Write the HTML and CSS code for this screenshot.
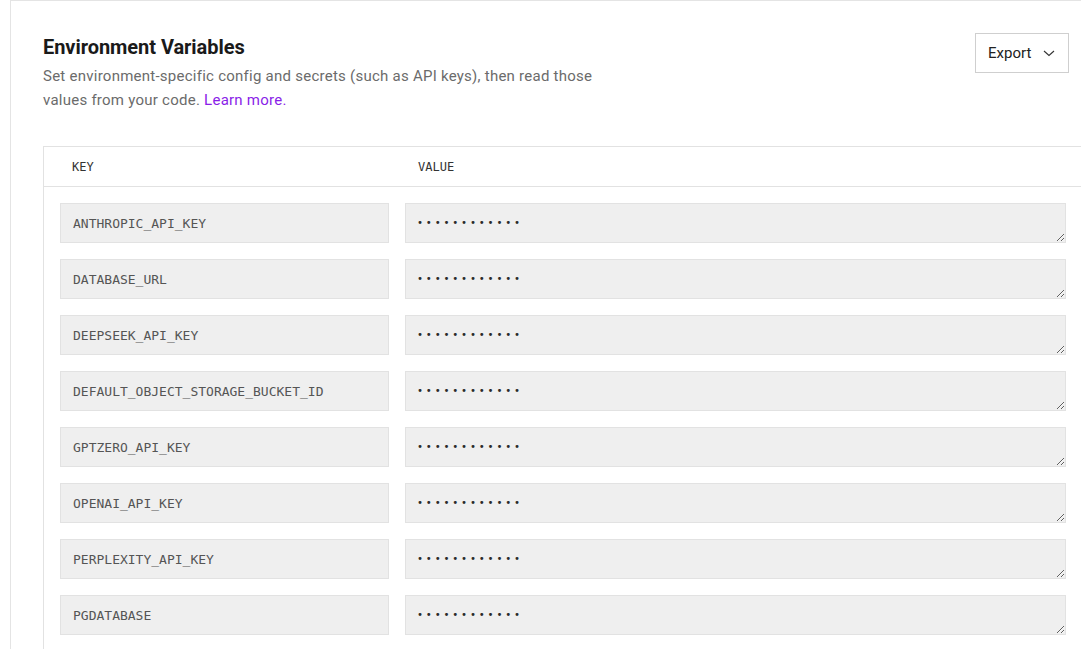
FILE: index.html
```html
<!DOCTYPE html>
<html lang="en">
<head>
<meta charset="utf-8">
<title>Environment Variables</title>
<link rel="stylesheet" href="styles.css">
</head>
<body>
<div class="card">
  <div class="head">
    <div class="intro">
      <h1 class="title">Environment Variables</h1>
      <p class="desc">Set environment-specific config and secrets (such as API keys), then read those values from your code. <a class="link" href="#">Learn more.</a></p>
    </div>
    <button class="export" type="button">Export
      <svg class="chev" width="12" height="12" viewBox="0 0 12 12"><path d="M1 4 L6 8.5 L11 4" fill="none" stroke="#333" stroke-width="1.1"/></svg>
    </button>
  </div>
  <div class="table">
    <div class="thead">
      <div class="th th-key">KEY</div>
      <div class="th th-val">VALUE</div>
    </div>
    <div class="tbody">
      <div class="row"><input class="key" readonly value="ANTHROPIC_API_KEY"><textarea class="val" readonly>••••••••••••</textarea></div>
      <div class="row"><input class="key" readonly value="DATABASE_URL"><textarea class="val" readonly>••••••••••••</textarea></div>
      <div class="row"><input class="key" readonly value="DEEPSEEK_API_KEY"><textarea class="val" readonly>••••••••••••</textarea></div>
      <div class="row"><input class="key" readonly value="DEFAULT_OBJECT_STORAGE_BUCKET_ID"><textarea class="val" readonly>••••••••••••</textarea></div>
      <div class="row"><input class="key" readonly value="GPTZERO_API_KEY"><textarea class="val" readonly>••••••••••••</textarea></div>
      <div class="row"><input class="key" readonly value="OPENAI_API_KEY"><textarea class="val" readonly>••••••••••••</textarea></div>
      <div class="row"><input class="key" readonly value="PERPLEXITY_API_KEY"><textarea class="val" readonly>••••••••••••</textarea></div>
      <div class="row"><input class="key" readonly value="PGDATABASE"><textarea class="val" readonly>••••••••••••</textarea></div>
    </div>
  </div>
</div>
</body>
</html>
```
FILE: styles.css
```css
html, body {
  margin: 0;
  padding: 0;
  background: #fff;
  overflow: hidden;
  height: 649px;
}
body {
  font-family: Roboto, "Liberation Sans", sans-serif;
  color: #1a1a1a;
}
.card {
  margin-left: 10px;
  width: 1100px;
  border-left: 1px solid #e4e4e4;
  border-top: 1px solid #e4e4e4;
  padding: 32px 0 0 32px;
  box-sizing: border-box;
}
.head {
  width: 1026px;
  display: flex;
  justify-content: space-between;
  align-items: flex-start;
}
.title {
  margin: 0;
  font-size: 20px;
  line-height: 28px;
  font-weight: 700;
  letter-spacing: -0.05px;
  color: #1a1a1a;
}
.desc {
  margin: 3px 0 0;
  width: 570px;
  font-size: 15px;
  line-height: 24px;
  letter-spacing: 0.25px;
  color: #6b6b6b;
}
.link {
  color: #8a1ee8;
  text-decoration: none;
}
.export {
  width: 94px;
  height: 40px;
  border: 1px solid #cfcfcf;
  background: #fff;
  font-family: Roboto, "Liberation Sans", sans-serif;
  font-size: 15px;
  color: #222;
  display: flex;
  align-items: center;
  gap: 12px;
  padding: 0 0 0 12px;
  box-sizing: border-box;
}
.chev { display: block; }
.table {
  margin-top: 34px;
  width: 1040px;
  border-top: 1px solid #e2e2e2;
  border-left: 1px solid #e2e2e2;
}
.thead {
  display: flex;
  height: 39px;
  align-items: center;
  border-bottom: 1px solid #e2e2e2;
  padding: 0 16px;
  gap: 16px;
  font-family: "DejaVu Sans Mono", monospace;
  font-size: 12px;
  color: #333;
}
.th-key { width: 329px; padding-left: 12px; box-sizing: border-box; }
.th-val { padding-left: 13px; }
.tbody {
  display: flex;
  flex-direction: column;
  gap: 16px;
  padding: 16px;
}
.row {
  display: flex;
  gap: 16px;
}
.key, .val {
  height: 40px;
  box-sizing: border-box;
  background: #efefef;
  border: 1px solid #e2e2e2;
  border-radius: 0;
  font-family: "DejaVu Sans Mono", monospace;
  font-size: 13px;
  color: #555;
  outline: none;
  margin: 0;
}
.key {
  width: 329px;
  padding: 0 12px;
}
.val {
  width: 661px;
  padding: 10px 11px 0;
  font-size: 10px;
  line-height: 18px;
  letter-spacing: 2.8px;
  color: #2a2a2a;
  resize: vertical;
  overflow: hidden;
}
```
